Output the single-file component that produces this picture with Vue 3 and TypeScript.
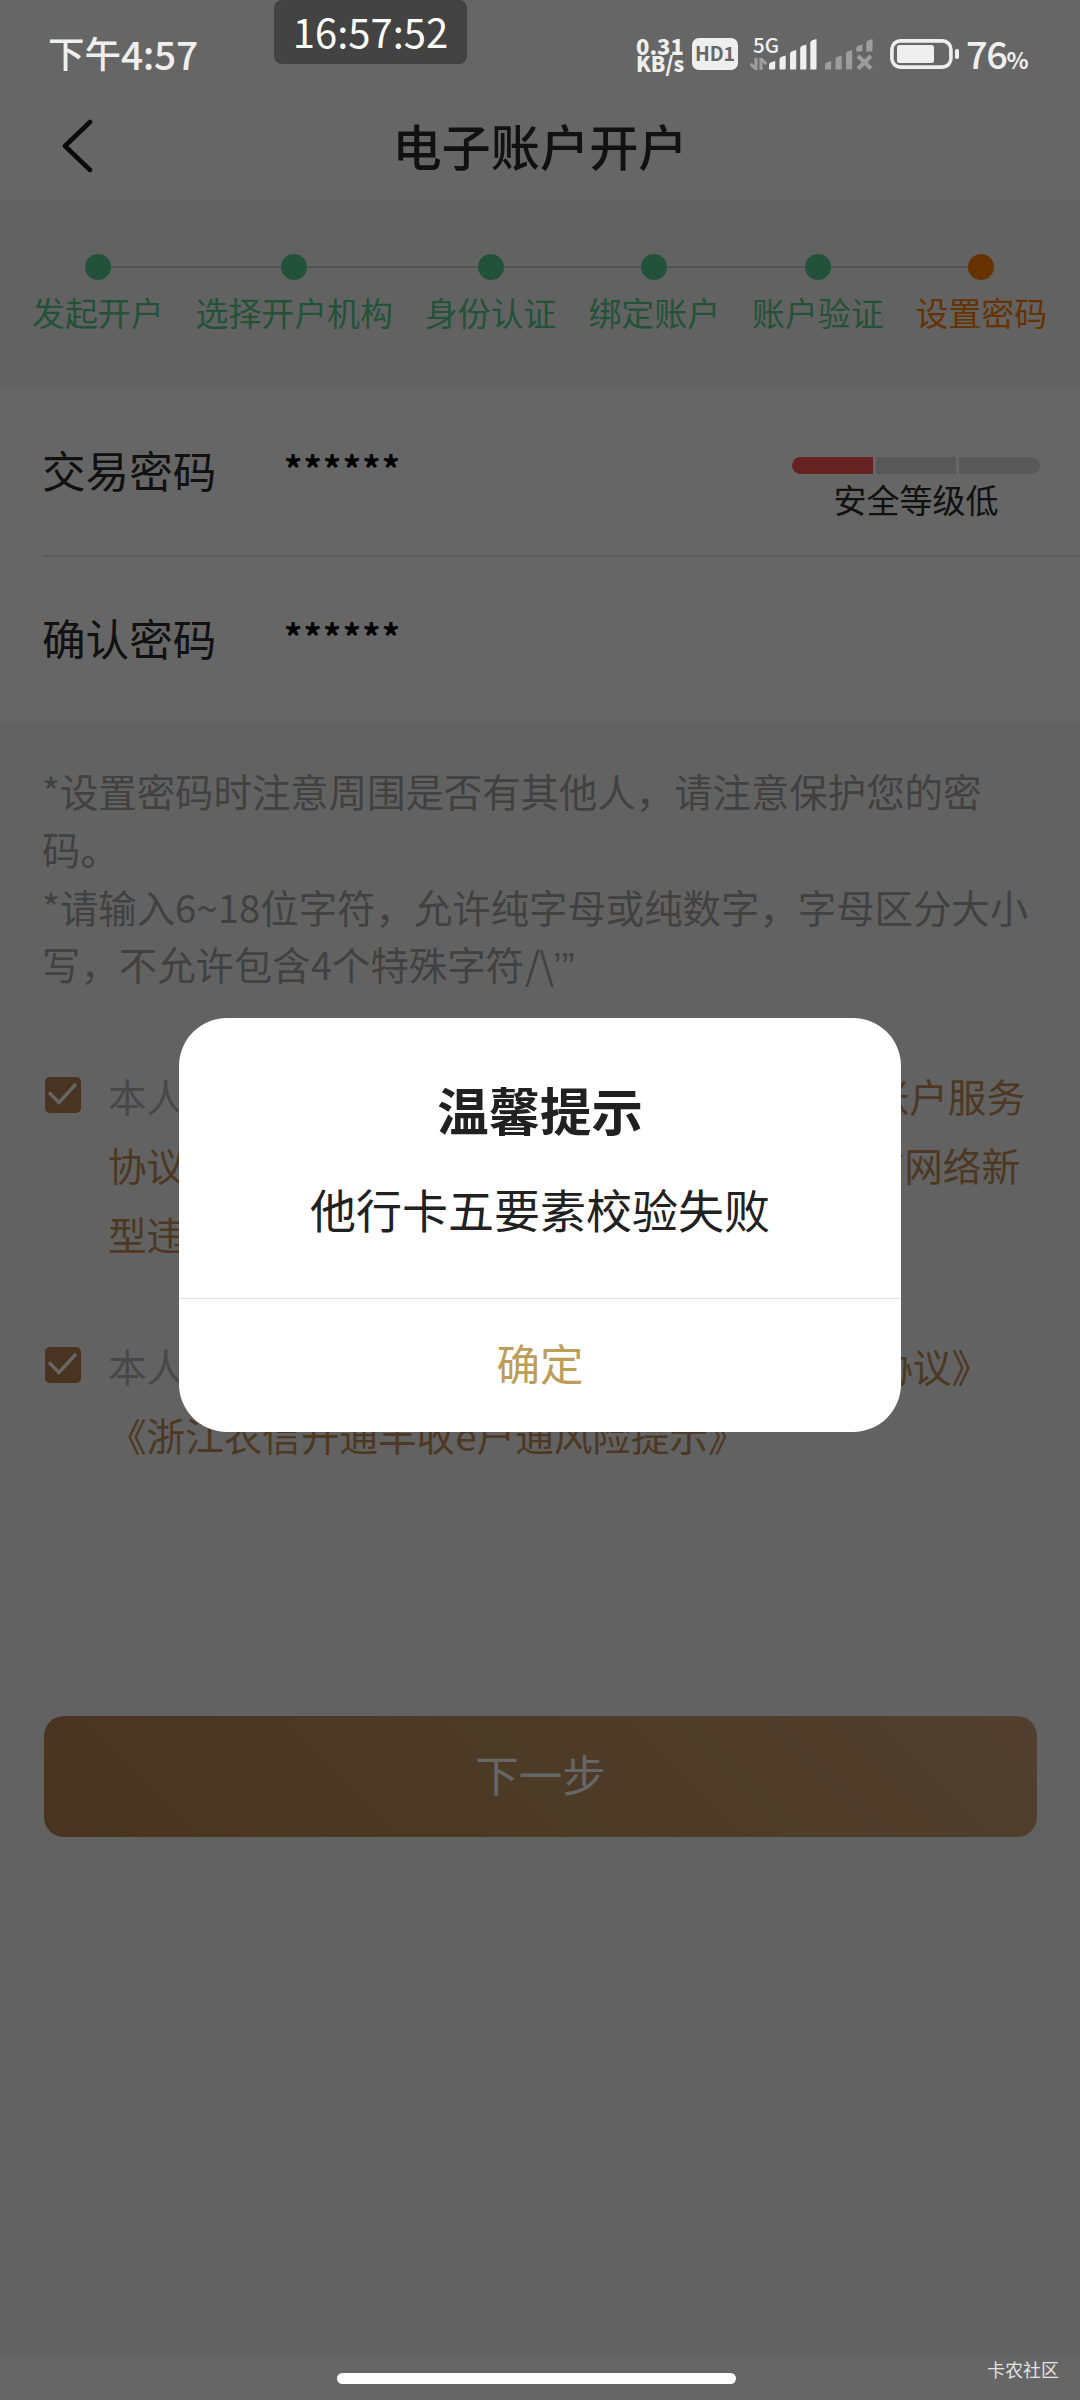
<script setup lang="ts">
interface Step {
  label: string
  active?: boolean
}

const steps: Step[] = [
  { label: '发起开户' },
  { label: '选择开户机构' },
  { label: '身份认证' },
  { label: '绑定账户' },
  { label: '账户验证' },
  { label: '设置密码', active: true },
]

const signalBars = [
  { x: 0, y: 22 },
  { x: 10.5, y: 16.5 },
  { x: 21, y: 11 },
  { x: 31.2, y: 5.5 },
  { x: 41.3, y: 0 },
]

const barPath = (x: number, y: number, bottom: number): string =>
  `M${x} ${bottom}V${y + 4}Q${x} ${y + 2} ${x + 2} ${y + 1.2}L${x + 6.2} ${y}V${bottom - 1}Q${x + 6.2} ${bottom} ${x + 5.2} ${bottom}Z`
</script>

<template>
  <div class="screen">
    <header class="status">
      <div class="clock"><span class="cn">下午</span><span class="num">4:57</span></div>
      <div class="indicators">
        <div class="speed"><span class="rate">0.31</span><span class="unit">KB/s</span></div>
        <div class="hd">HD1</div>
        <div class="cell">
          <span class="gen">5G</span>
          <svg class="data" width="17" height="12" viewBox="0 0 17 12">
            <path d="M6 0V11L0.5 6M11 12V1L16.5 6" fill="none" stroke="#9d9d9d" stroke-width="3.2" />
          </svg>
          <svg width="48" height="31" viewBox="0 0 48 31">
            <path v-for="b in signalBars" :key="b.x" :d="barPath(b.x, b.y, 30.5)" fill="#efefef" />
          </svg>
        </div>
        <svg class="nosim" width="48" height="31" viewBox="0 0 48 31">
          <path v-for="b in signalBars.slice(0, 3)" :key="b.x" :d="barPath(b.x, b.y, 30.5)" fill="#9d9d9d" />
          <path v-for="b in signalBars.slice(3)" :key="b.x" :d="barPath(b.x, b.y, 12.5)" fill="#9d9d9d" />
          <path d="M33 17L46 29.5M46 17L33 29.5" stroke="#9d9d9d" stroke-width="4.2" />
        </svg>
        <svg class="battery" width="70" height="30" viewBox="0 0 70 30">
          <rect x="1.9" y="1.9" width="59" height="26.2" rx="8.5" fill="none" stroke="#efefef" stroke-width="3.6" />
          <rect x="7" y="6" width="37" height="18" rx="2.5" fill="#efefef" />
          <rect x="65" y="10" width="4" height="10" rx="1.8" fill="#efefef" />
        </svg>
        <div class="pct">76<small>%</small></div>
      </div>
    </header>
    <div class="stamp">16:57:52</div>

    <nav class="nav">
      <svg class="back" width="34" height="54" viewBox="0 0 34 54">
        <path d="M29 3L4 27L29 51" fill="none" stroke="#1a1a1a" stroke-width="4.6" stroke-linecap="round" stroke-linejoin="round" />
      </svg>
      <h1>电子账户开户</h1>
    </nav>

    <section class="steps">
      <div v-for="s in steps" :key="s.label" class="step" :class="{ active: s.active }">
        <div class="rail"><i class="line" /><i class="dot" /><i class="line" /></div>
        <span>{{ s.label }}</span>
      </div>
    </section>

    <section class="form">
      <div class="row">
        <label>交易密码</label>
        <span class="stars">******</span>
        <div class="strength">
          <div class="bars"><i class="on" /><i /><i /></div>
          <span>安全等级低</span>
        </div>
      </div>
      <div class="rule" />
      <div class="row">
        <label>确认密码</label>
        <span class="stars">******</span>
      </div>
    </section>

    <section class="tips">
      <p>*设置密码时注意周围是否有其他人，请注意保护您的密</p>
      <p>码。</p>
      <p>*请输入6~18位字符，允许纯字母或纯数字，字母区分大小</p>
      <p>写，不允许包含4个特殊字符<span class="marks">/\<span class="quotes">’”</span></span></p>
    </section>

    <section class="agree first">
      <svg class="check" width="36" height="36" viewBox="0 0 36 36">
        <rect width="36" height="36" rx="5" fill="#b48250" />
        <path d="M4 15.5L14 25.5L31 7" fill="none" stroke="#fff" stroke-width="3.4" />
      </svg>
      <div class="lines">
        <p class="l1"><span>本人已阅读并同意签署</span><a>《浙江农信个人电子账户服务</a></p>
        <p class="l2"><a>协议》《浙江农信</a><a>防范打击治理电信网络新</a></p>
        <p><a>型违法犯罪风险提示》</a></p>
      </div>
    </section>

    <section class="agree second">
      <svg class="check" width="36" height="36" viewBox="0 0 36 36">
        <rect width="36" height="36" rx="5" fill="#b48250" />
        <path d="M4 15.5L14 25.5L31 7" fill="none" stroke="#fff" stroke-width="3.4" />
      </svg>
      <div class="lines">
        <p class="l3"><span>本人已阅读并同意签署</span><a>《浙江农信丰收e户通协议》</a></p>
        <p><a>《浙江农信开通丰收e户通风险提示》</a></p>
      </div>
    </section>

    <button class="next">下一步</button>

    <footer class="bottom" />

    <div class="mask" />
    <div class="dialog">
      <h2>温馨提示</h2>
      <p>他行卡五要素校验失败</p>
      <button>确定</button>
    </div>
    <div class="home" />
    <div class="brand">卡农社区</div>
  </div>
</template>

<style>
body {
  margin: 0;
  background: #626262;
}
</style>

<style scoped>
.screen {
  position: relative;
  display: flex;
  flex-direction: column;
  width: 1080px;
  height: 2400px;
  overflow: hidden;
  background: #f5f5f5;
  color: #2b2b2b;
  font-family: "Noto Sans CJK SC", sans-serif;
  white-space: nowrap;
}
h1, h2, p {
  margin: 0;
}
button {
  padding: 0;
  border: 0;
  background: none;
  font-family: inherit;
}
svg {
  display: block;
  flex: none;
}

.status {
  position: relative;
  z-index: 3;
  display: flex;
  justify-content: space-between;
  height: 100px;
  box-sizing: border-box;
  padding: 36px 54px 0 48px;
  color: #efefef;
  background: #666;
}
.clock {
  display: flex;
  height: 33px;
  align-items: center;
  font-weight: 500;
}
.clock .cn {
  font-size: 36.5px;
}
.clock .num {
  font-size: 39px;
  letter-spacing: -0.4px;
}
.indicators {
  display: flex;
  align-items: flex-start;
}
.speed {
  display: flex;
  flex-direction: column;
  width: 56px;
  font: 900 21px/18px "Noto Sans CJK SC", sans-serif;
}
.speed .rate {
  font-size: 22px;
}
.hd {
  width: 46px;
  height: 32px;
  margin-top: 2px;
  border-radius: 7px;
  background: #efefef;
  color: #666;
  font: 700 19.5px/30px "Noto Sans CJK SC", sans-serif;
  text-align: center;
}
.cell {
  position: relative;
  width: 48px;
  margin: 3px 0 0 31px;
}
.gen {
  position: absolute;
  left: -16px;
  top: -5px;
  font: 500 20.5px/20px "Noto Sans CJK SC", sans-serif;
}
.data {
  position: absolute;
  left: -19px;
  top: 19px;
}
.nosim {
  margin: 3px 0 0 8px;
}
.battery {
  margin: 3px 0 0 17px;
}
.pct {
  width: 60px;
  margin-left: 6px;
  font-weight: 500;
  font-size: 38px;
  line-height: 34px;
  letter-spacing: -1.4px;
}
.pct small {
  font-size: 23px;
  font-weight: 700;
}
.stamp {
  position: absolute;
  z-index: 4;
  left: 274px;
  top: 0;
  width: 193px;
  height: 64px;
  border-radius: 8px;
  background: #434343;
  color: #fff;
  font-size: 40px;
  line-height: 62px;
  text-align: center;
}

.nav {
  position: relative;
  display: flex;
  align-items: center;
  justify-content: center;
  height: 100px;
  background: #fff;
}
.back {
  position: absolute;
  left: 61px;
  top: 19px;
}
h1 {
  font-size: 49.2px;
  line-height: 90px;
  height: 100px;
  font-weight: 500;
}

.steps {
  display: flex;
  height: 189px;
  box-sizing: border-box;
  padding: 54px 0 0 16px;
}
.step {
  display: flex;
  flex-direction: column;
  color: #57ce90;
}
.step > span {
  padding: 0 16px;
  font-size: 32.9px;
  line-height: 40px;
  margin-top: 12px;
}
.rail {
  display: flex;
  align-items: center;
}
.dot {
  width: 26px;
  height: 26px;
  border-radius: 50%;
  background: #55ce8f;
}
.line {
  flex: 1;
  height: 2px;
  background: #cfcfcf;
}
.step:first-child .line:first-child,
.step:last-child .line:last-child {
  visibility: hidden;
}
.active {
  color: #ff8000;
}
.active .dot {
  background: #ff8000;
}

.form {
  height: 333px;
  background: #fff;
}
.row {
  display: flex;
  height: 166px;
  align-items: center;
  padding-left: 42px;
}
.rule {
  height: 2px;
  margin-left: 42px;
  background: #e2e2e2;
}
label {
  width: 242px;
  margin-bottom: 6px;
  font-size: 43.6px;
  line-height: 60px;
}
.stars {
  margin-bottom: 11px;
  color: #000;
  font-weight: 700;
  font-size: 36px;
  letter-spacing: 1.3px;
}
.strength {
  width: 248px;
  margin: 38px 40px 0 auto;
  text-align: center;
  font-size: 33px;
}
.strength span {
  display: block;
  line-height: 51px;
}
.bars {
  display: flex;
  gap: 3px;
  height: 17px;
  border-radius: 9px;
  overflow: hidden;
}
.bars i {
  flex: 1;
  background: #dcdcdc;
}
.bars .on {
  background: #ff5357;
}

.tips {
  padding: 40px 0 0 42px;
  color: #a4a4a4;
  font-size: 38.4px;
  line-height: 57.8px;
}
.marks {
  margin-left: 1px;
  font-family: "Noto Sans CJK SC", sans-serif;
  letter-spacing: -1px;
}
.quotes {
  font-family: "Liberation Sans", sans-serif;
  letter-spacing: 0;
}

.agree {
  display: flex;
  align-items: flex-start;
  padding-left: 45px;
  font-size: 38.6px;
  line-height: 69px;
  color: #b5b5b5;
}
.agree a {
  color: #c08c58;
}
.lines {
  margin: -2px 0 0 27px;
}
.lines p {
  display: flex;
  justify-content: space-between;
  height: 69px;
}
.first {
  margin-top: 67px;
}
.second {
  margin-top: 65px;
}
.check {
  margin-top: 14px;
}
.l1 {
  width: 917px;
}
.l2 {
  width: 912px;
}
.l3 {
  width: 882px;
}

.next {
  width: 993px;
  height: 121px;
  margin: 247px 0 0 44px;
  padding-bottom: 5px;
  border-radius: 20px;
  background: linear-gradient(45deg, #b4824f, #bf945f 50%, #cda077);
  color: #fff;
  font-size: 43.5px;
  line-height: 112px;
}
.bottom {
  height: 44px;
  margin-top: auto;
  background: #fff;
}

.mask {
  position: absolute;
  inset: 0;
  z-index: 1;
  background: rgba(0, 0, 0, 0.6);
}
.dialog {
  position: absolute;
  z-index: 2;
  left: 179px;
  top: 1018px;
  width: 722px;
  height: 414px;
  border-radius: 48px;
  overflow: hidden;
  background: #fff;
  color: #212121;
  text-align: center;
}
.dialog h2 {
  margin-top: 56px;
  font-size: 51.4px;
  line-height: 70px;
  font-weight: 700;
}
.dialog p {
  height: 120px;
  margin-top: 34px;
  font-size: 46px;
  line-height: 60px;
  border-bottom: 1px solid #e0e0e0;
}
.dialog button {
  width: 100%;
  height: 132px;
  padding-bottom: 4px;
  color: #bd9e58;
  font-size: 43.5px;
  line-height: 128px;
}
.home {
  position: absolute;
  z-index: 3;
  left: 337px;
  top: 2373px;
  width: 399px;
  height: 11px;
  border-radius: 6px;
  background: #fff;
}
.brand {
  position: absolute;
  z-index: 3;
  left: 987px;
  top: 2356px;
  color: #e2e2e2;
  font-size: 18px;
  line-height: 26px;
}
</style>
